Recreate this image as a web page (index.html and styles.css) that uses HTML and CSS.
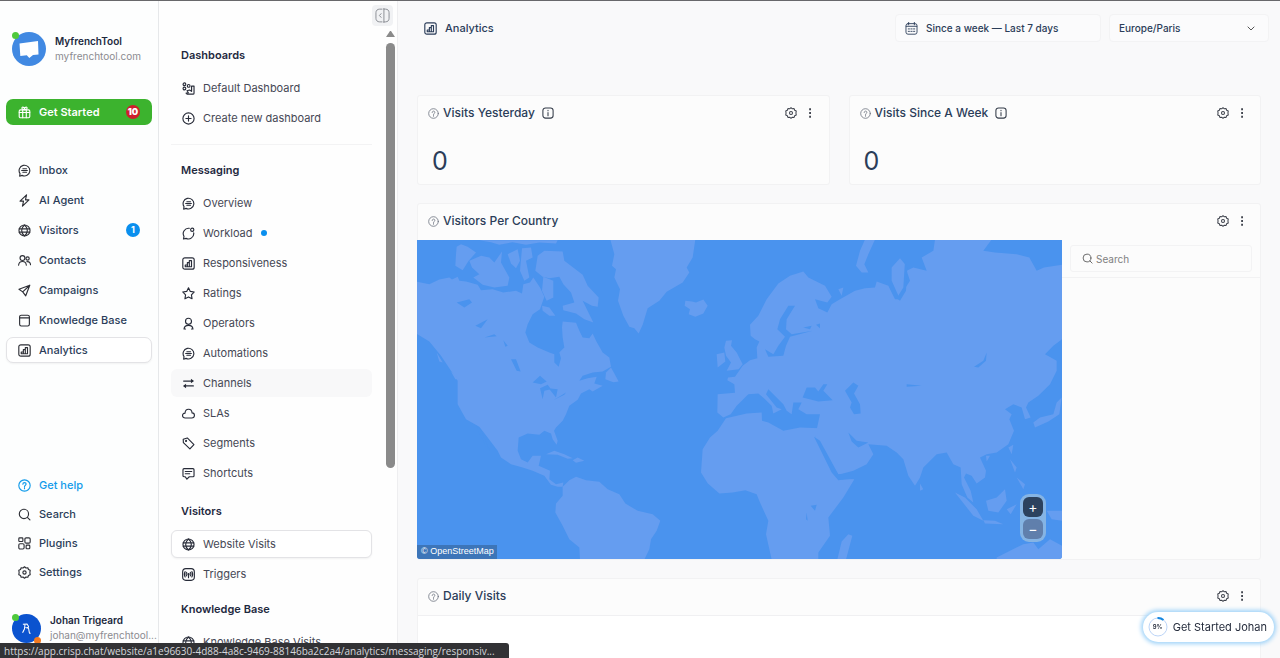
FILE: index.html
```
<!DOCTYPE html>
<html lang="en">
<head>
<meta charset="utf-8">
<title>Analytics</title>
<link rel="stylesheet" href="styles.css">
</head>
<body>
<svg class="sprite" aria-hidden="true">
  <symbol id="i-gift" viewBox="0 0 16 16"><rect x="1.5" y="4.8" width="13" height="9.7" rx="1.5"/><path d="M1.5 8h13M5.8 4.8v9.7M10.2 4.8v9.7M8 4.6C4 4.6 4.2 1.2 6 1.4c1.300.1 2 1.600 2 3.200 0-1.600.7-3.100 2-3.200 1.800-.2 2 3.200-2 3.200"/></symbol>
  <symbol id="i-chat" viewBox="0 0 16 16"><path d="M2 15l.5-3.200A6.600 6.600 0 1 1 5 14z"/><path d="M6 5.800h4.500M4.500 8h7M6 10.200h4.500"/></symbol>
  <symbol id="i-bolt" viewBox="0 0 16 16"><path d="M10.500 1L2.500 8.800h4.300L5.500 15l8-7.800H9.200z"/></symbol>
  <symbol id="i-globe" viewBox="0 0 16 16"><circle cx="8" cy="8" r="6.800"/><path d="M1.500 6h13M1.500 10h13M8 1.200c-4.600 3.600-4.600 10 0 13.600 4.600-3.600 4.600-10 0-13.600z"/></symbol>
  <symbol id="i-users" viewBox="0 0 16 16"><circle cx="5.500" cy="5" r="3"/><circle cx="11.800" cy="5.600" r="2"/><path d="M.7 13.800c.3-3 2-4.600 4.800-4.600s4.500 1.600 4.800 4.600M10.800 9.500c2.800-.6 4.300 1 4.600 3.600"/></symbol>
  <symbol id="i-send" viewBox="0 0 16 16"><path d="M14.500 1.500L1.200 6.500l4.600 3.200 3.700 4.800zM5.800 9.700L14.500 1.500"/></symbol>
  <symbol id="i-book" viewBox="0 0 16 16"><rect x="2" y="1.500" width="12" height="13.200" rx="2"/><path d="M2 4.800h12"/></symbol>
  <symbol id="i-chart" viewBox="0 0 16 16"><rect x="1" y="1" width="14" height="14" rx="2.500"/><path d="M4 12V9.800h2.600V12zM6.600 12V7h2.400v5zM9 12V4.500h2.700V12z"/></symbol>
  <symbol id="i-help" viewBox="0 0 16 16"><circle cx="8" cy="8" r="7"/><path d="M6 6.500C6 3.700 10 3.900 10 6.300 10 7.800 8 7.700 8 9.500M8 11v1"/></symbol>
  <symbol id="i-search" viewBox="0 0 16 16"><circle cx="7.300" cy="7.300" r="5.700"/><path d="M11.500 11.500l3.200 3.200"/></symbol>
  <symbol id="i-plugins" viewBox="0 0 16 16"><rect x="1" y="1" width="5" height="4.500" rx="1"/><rect x="8.500" y="1" width="6.500" height="6.500" rx="1.500"/><rect x="1" y="8.300" width="6.500" height="6.500" rx="1.500"/><rect x="10" y="10" width="4.500" height="4.500" rx="1"/></symbol>
  <symbol id="i-gear" viewBox="0 0 16 16"><circle cx="8" cy="8" r="2"/><path d="M8 .9l1.800 1.500 2.300-.3.800 2.200 2.100 1L14.600 8l.4 2.700-2.100 1-.8 2.200-2.300-.3L8 15.100l-1.800-1.500-2.300.3-.8-2.200-2.100-1L1.400 8 1 5.300l2.100-1 .8-2.200 2.300.3z"/></symbol>
  <symbol id="i-dash" viewBox="0 0 16 16"><circle cx="3" cy="2.800" r="1.700"/><circle cx="3" cy="8" r="1.700"/><circle cx="8.200" cy="4.800" r="1.700"/><path d="M11.800 5h3v8.700c0 .8-.5 1.300-1.300 1.300H6.300L5 13.600l2.800-.4-1.600-2.500 3.200-.9 2.400 1.700z"/></symbol>
  <symbol id="i-plus" viewBox="0 0 16 16"><circle cx="8" cy="8" r="6.900"/><path d="M8 4.800v6.400M4.800 8h6.400"/></symbol>
  <symbol id="i-load" viewBox="0 0 16 16"><circle cx="12.600" cy="3.400" r="2"/><path d="M14.400 7.200A6.600 6.600 0 0 1 5 14L1.800 14.800 2.500 11.600A6.600 6.600 0 0 1 9 1.600"/></symbol>
  <symbol id="i-star" viewBox="0 0 16 16"><path d="M8 1l2.200 4.400 4.900.7-3.500 3.500.8 4.900L8 12.200l-4.400 2.300.8-4.900L.9 6.100l4.900-.7z"/></symbol>
  <symbol id="i-user" viewBox="0 0 16 16"><circle cx="8" cy="5.300" r="3.700"/><path d="M4.300 14.800H2.500c.3-2.700 2.200-4.500 5.500-4.500s5.200 1.800 5.500 4.500h-1.800"/></symbol>
  <symbol id="i-swap" viewBox="0 0 16 16"><path d="M2 5h11M14 11H3"/><path class="solid" d="M11 2.200L14.800 5 11 7.800zM5 8.200L1.200 11 5 13.800z"/></symbol>
  <symbol id="i-cloud" viewBox="0 0 16 16"><path d="M4 13.500C-.5 13.500-.3 7.500 3.700 7.500 4.300 1 12 1.500 12.400 7.300c3.900.2 3.900 6.200-.4 6.200z"/></symbol>
  <symbol id="i-tag" viewBox="0 0 16 16"><path d="M1.500 2.800L6.500 1.200l8.200 8.300-5 5.200L1.700 7z"/><circle cx="5" cy="4.800" r=".6"/></symbol>
  <symbol id="i-note" viewBox="0 0 16 16"><path d="M2.500 2h11c.8 0 1.300.5 1.300 1.300v7.400c0 .8-.5 1.300-1.300 1.300H9l-3 3-2-3H2.500c-.8 0-1.300-.5-1.300-1.300V3.300C1.200 2.500 1.700 2 2.500 2zM4 5.500h8M4 8.300h5.500"/></symbol>
  <symbol id="i-signal" viewBox="0 0 16 16"><rect x=".8" y=".8" width="14.400" height="14.400" rx="4"/><circle cx="8" cy="7.500" r=".8"/><path d="M8 8v4M5.800 5.500c-1 1.200-1 3 0 4.200M10.200 5.500c1 1.200 1 3 0 4.200M3.900 4.500c-1.300 2-1.300 4.500 0 6.500M12.100 4.500c1.300 2 1.300 4.500 0 6.500"/></symbol>
  <symbol id="i-info" viewBox="0 0 16 16"><rect x="1.200" y="1.200" width="13.600" height="13.600" rx="3.500"/><path d="M8 4.300v.6M8 7.500v4"/></symbol>
  <symbol id="i-cal" viewBox="0 0 16 16"><rect x="1.200" y="2" width="13.600" height="13" rx="2.500"/><path d="M4.500.5v3M11.500.5v3M1.500 5.300h13M4 8.500h1.500M7.200 8.500h1.600M10.500 8.500H12M4 11.500h1.500M7.200 11.500h1.600M10.500 11.500H12"/></symbol>
  <symbol id="i-dots" viewBox="0 0 16 16"><path class="solid" d="M6.900 1.800h2.400v2.600H6.900zM6.900 6.700h2.400v2.600H6.900zM6.900 11.600h2.400v2.600H6.900z"/></symbol>
  <symbol id="i-collapse" viewBox="0 0 16 16"><path d="M7.500 1.200H5C2.500 1.200 1 2.700 1 5v6c0 2.300 1.500 3.800 4 3.800h2.500M9.500.5v15M9.500 1.200h1.700C13.600 1.200 15 2.700 15 5v6c0 2.300-1.400 3.800-3.800 3.800H9.500M6.500 6L4.700 8l1.800 2"/></symbol>
</svg>

<div class="app">
  <aside class="sidebar">
    <div class="account">
      <span class="logo"><svg viewBox="0 0 34 34"><circle cx="17" cy="17" r="17"/><path d="M7.500 11.500L26 9l.5 13.500-5.500.4-3.700 3.100-2.500-2.700-6.500.6z"/></svg><i class="presence"></i></span>
      <div><strong>MyfrenchTool</strong><span>myfrenchtool.com</span></div>
    </div>
    <a class="nav started" href="#"><svg class="icon"><use href="#i-gift"/></svg>Get Started<b class="count red">10</b></a>
    <nav class="menu">
      <a class="nav" href="#"><svg class="icon"><use href="#i-chat"/></svg>Inbox</a>
      <a class="nav" href="#"><svg class="icon"><use href="#i-bolt"/></svg>AI Agent</a>
      <a class="nav" href="#"><svg class="icon"><use href="#i-globe"/></svg>Visitors<b class="count">1</b></a>
      <a class="nav" href="#"><svg class="icon"><use href="#i-users"/></svg>Contacts</a>
      <a class="nav" href="#"><svg class="icon"><use href="#i-send"/></svg>Campaigns</a>
      <a class="nav" href="#"><svg class="icon"><use href="#i-book"/></svg>Knowledge Base</a>
      <a class="nav selected" href="#"><svg class="icon"><use href="#i-chart"/></svg>Analytics</a>
    </nav>
    <nav class="menu lower">
      <a class="nav help" href="#"><svg class="icon"><use href="#i-help"/></svg>Get help</a>
      <a class="nav" href="#"><svg class="icon"><use href="#i-search"/></svg>Search</a>
      <a class="nav" href="#"><svg class="icon"><use href="#i-plugins"/></svg>Plugins</a>
      <a class="nav" href="#"><svg class="icon"><use href="#i-gear"/></svg>Settings</a>
    </nav>
    <div class="account operator">
      <span class="logo avatar"><svg viewBox="0 0 28 28"><circle cx="14" cy="14" r="14"/><path class="sketch" d="M10.500 10l4-.3 1.500 2.300-1 2M12.500 10.500l-.5 4-1.800 3.500M13 13l3 .8.800 4.500M16.500 18.500h1.500"/></svg><i class="presence"></i><i class="device"></i></span>
      <div><strong>Johan Trigeard</strong><span>johan@myfrenchtool...</span></div>
    </div>
  </aside>

  <section class="panel">
    <button class="collapse" type="button" aria-label="Collapse menu"><svg class="icon"><use href="#i-collapse"/></svg></button>
    <div class="scrollbar"><i></i><b></b></div>
    <div class="group ruled">
      <h2>Dashboards</h2>
      <a class="item" href="#"><svg class="icon"><use href="#i-dash"/></svg>Default Dashboard</a>
      <a class="item" href="#"><svg class="icon"><use href="#i-plus"/></svg>Create new dashboard</a>
    </div>
    <div class="group roomy">
      <h2>Messaging</h2>
      <a class="item" href="#"><svg class="icon"><use href="#i-chat"/></svg>Overview</a>
      <a class="item" href="#"><svg class="icon"><use href="#i-load"/></svg>Workload<i class="dot"></i></a>
      <a class="item" href="#"><svg class="icon"><use href="#i-chart"/></svg>Responsiveness</a>
      <a class="item" href="#"><svg class="icon"><use href="#i-star"/></svg>Ratings</a>
      <a class="item" href="#"><svg class="icon"><use href="#i-user"/></svg>Operators</a>
      <a class="item" href="#"><svg class="icon"><use href="#i-chat"/></svg>Automations</a>
      <a class="item hovered" href="#"><svg class="icon"><use href="#i-swap"/></svg>Channels</a>
      <a class="item" href="#"><svg class="icon"><use href="#i-cloud"/></svg>SLAs</a>
      <a class="item" href="#"><svg class="icon"><use href="#i-tag"/></svg>Segments</a>
      <a class="item" href="#"><svg class="icon"><use href="#i-note"/></svg>Shortcuts</a>
    </div>
    <div class="group">
      <h2>Visitors</h2>
      <a class="item selected" href="#"><svg class="icon"><use href="#i-globe"/></svg>Website Visits</a>
      <a class="item" href="#"><svg class="icon"><use href="#i-signal"/></svg>Triggers</a>
    </div>
    <div class="group">
      <h2>Knowledge Base</h2>
      <a class="item" href="#"><svg class="icon"><use href="#i-globe"/></svg>Knowledge Base Visits</a>
    </div>
  </section>

  <main class="main">
    <header class="topbar">
      <h1><svg class="icon"><use href="#i-chart"/></svg>Analytics</h1>
      <button class="field date" type="button"><svg class="icon"><use href="#i-cal"/></svg>Since a week — Last 7 days</button>
      <span class="field zone"><select aria-label="Time zone"><option>Europe/Paris</option></select><svg viewBox="0 0 8 5"><path d="M.7.7L4 4 7.300.7"/></svg></span>
    </header>
    <div class="cards">
      <article class="card stat">
        <div class="head"><svg class="icon hint"><use href="#i-help"/></svg><h3>Visits Yesterday</h3><svg class="icon info"><use href="#i-info"/></svg>
          <button type="button" aria-label="Settings"><svg class="icon"><use href="#i-gear"/></svg></button><button type="button" aria-label="More"><svg class="icon"><use href="#i-dots"/></svg></button></div>
        <p class="value">0</p>
      </article>
      <article class="card stat">
        <div class="head"><svg class="icon hint"><use href="#i-help"/></svg><h3>Visits Since A Week</h3><svg class="icon info"><use href="#i-info"/></svg>
          <button type="button" aria-label="Settings"><svg class="icon"><use href="#i-gear"/></svg></button><button type="button" aria-label="More"><svg class="icon"><use href="#i-dots"/></svg></button></div>
        <p class="value">0</p>
      </article>
      <article class="card wide">
        <div class="head"><svg class="icon hint"><use href="#i-help"/></svg><h3>Visitors Per Country</h3>
          <button type="button" aria-label="Settings"><svg class="icon"><use href="#i-gear"/></svg></button><button type="button" aria-label="More"><svg class="icon"><use href="#i-dots"/></svg></button></div>
        <div class="geo">
          <div class="map">
            <svg viewBox="3 6 1935 960" preserveAspectRatio="xMidYMid slice" role="img" aria-label="World map">
              <g class="land">
                <path d="M0 132L40 140 70 126 100 120 108 126 125 118 130 130 150 132 185 142 195 158 230 155 262 165 300 160 318 168 322 140 342 135 352 120 372 150 385 178 372 215 350 230 335 260 328 285 340 315 365 330 400 345 415 350 415 375 428 388 435 362 430 345 445 330 440 300 438 270 440 252 480 256 490 280 500 300 520 302 530 288 540 310 560 345 580 360 585 388 560 402 530 405 500 415 490 430 515 422 542 418 535 438 560 445 530 462 520 455 495 468 485 487 460 505 450 530 440 550 420 570 414 580 425 610 422 622 410 605 405 588 385 580 370 592 335 588 308 600 305 640 315 665 335 675 350 655 375 655 368 685 402 700 400 725 420 740 442 735 440 748 425 748 405 742 385 715 350 700 320 690 285 680 255 660 245 640 215 600 190 568 150 545 125 500 125 430 105 400 75 355 40 312 0 288Z"/>
                <path d="M122 28L135 20 155 28 180 45 158 70 140 98 118 85 120 50Z"/>
                <path d="M160 70L195 55 220 60 235 75 258 42 255 75 280 120 275 145 235 150 200 142 172 120 190 110 168 90Z"/>
                <path d="M190 8H425L420 18 370 15 330 22 290 14 250 22 225 14Z"/>
                <path d="M275 50L305 35 312 70 300 92 285 78Z"/><path d="M318 32L345 30 350 60 330 70 340 120 325 130 312 100Z"/>
                <path d="M365 55L385 40 440 42 445 70 500 112 515 145 548 180 545 208 528 205 500 190 532 255 505 245 480 228 442 218 440 205 475 195 465 165 442 140 430 118 400 122 380 118 358 100Z"/>
                <path d="M382 118L412 130 412 180 392 190 378 160Z"/><path d="M378 205L400 210 418 235 400 235 380 220Z"/>
                <path d="M583 6H838L830 60 812 90 820 105 800 135 752 163 730 190 695 212 680 262 668 288 655 272 640 268 622 235 606 190 612 155 595 120 600 95 588 85 595 50Z"/>
                <path d="M808 190L828 192 840 195 862 186 875 205 862 228 838 238 818 230 822 215 806 205Z"/>
                <path d="M568 425L570 405 585 390 595 408 608 432 592 434Z"/><path d="M390 650L415 640 445 650 470 662 455 664 425 652ZM470 668L485 660 505 670 480 676Z"/>
                <path d="M440 748L460 728 480 718 510 728 550 733 575 755 610 770 628 798 665 820 710 830 733 850 722 880 705 905 700 935 685 966H492L490 930 460 905 440 865 418 825 420 798 440 775Z"/>
                <path d="M902 350L925 345 928 372 905 390ZM930 310L948 308 945 325 962 345 980 380 968 395 932 400 945 375 930 355 925 330Z"/>
                <path d="M62 345L80 375 70 372ZM105 402L130 425 118 425Z"/>
              </g>
              <g class="water">
                <path d="M122 195L160 185 168 195 145 210ZM178 265L215 245 195 272ZM205 300L235 290 242 296ZM262 308L275 325 268 328ZM285 365L300 365 314 402 302 400ZM350 435L372 415 392 432 375 440ZM372 452L395 442 405 455 385 460 380 485ZM398 452L425 455 420 480ZM412 488L450 465 445 472Z"/>
                <path d="M180 565L195 580 222 640 208 625Z"/>
              </g>
              <g transform="translate(972 0)">
                <g class="land">
                  <path d="M-67 470L-15 466 -17 440 -38 428 -36 420 -15 418 8 385 30 368 52 362 50 330 58 312 45 305 32 295 30 262 55 235 80 185 115 138 150 115 190 102 205 120 255 145 275 178 262 195 225 185 235 212 262 225 275 200 300 185 345 160 375 152 405 150 410 132 445 145 465 185 480 185 455 130 455 90 480 62 495 80 497 150 510 130 500 100 520 90 560 100 545 60 580 40 585 6H755L730 40 765 45 830 50 868 60 890 100 912 90 966 82V305L940 325 915 350 950 370 950 400 930 440 895 475 865 495 858 510 872 540 855 545 845 510 820 500 795 515 815 530 808 545 822 580 805 620 770 645 740 650 720 660 738 700 735 720 710 738 695 715 678 708 672 720 692 760 700 795 682 780 665 740 662 690 640 680 620 645 590 650 550 690 540 720 525 745 505 715 490 665 470 645 440 625 385 620 400 650 380 680 340 700 295 712 225 600 240 530 200 530 175 515 185 495 160 495 155 530 140 520 130 500 85 455 78 470 110 510 125 515 100 528 95 505 75 485 55 468 25 470 0 495 -10 505 -28 530 -50 540 -68 525Z"/>
                  <path d="M-42 542L-67 580 -90 600 -112 635 -117 705 -97 737 -62 768 -22 765 16 758 50 770 60 795 85 850 78 890 95 966H235V945L270 895 265 840 310 780 343 725 295 724 275 700 225 600 238 572 180 570 130 580 85 555 66 550 65 525 20 528Z"/>
                  <path d="M305 912L325 890 337 895 318 966H292ZM375 6H405L385 50 373 80 385 105 365 105 348 85 360 40ZM540 738L550 755 540 760ZM645 765L675 780 710 815 730 850 700 835ZM738 790L770 780 795 755 800 790 775 825 745 820ZM805 630L820 622 815 650ZM810 665L830 690 825 705ZM830 720L855 740 850 755ZM730 848L765 850 790 860 735 858ZM880 555L900 540 940 530 950 495 965 480 958 530 925 552 885 570ZM800 815L830 800 812 830ZM920 820L966 820V850L935 845ZM770 960L810 940 850 920 880 915 895 935 930 905 966 925V966H770ZM738 655L750 655 740 672ZM295 155L310 150 305 175Z"/>
                </g>
                <g class="water">
                  <path d="M75 335L100 350 115 325 135 298 112 275 120 245 145 205 165 205 140 245 138 275 155 290 218 280 150 298 138 325 130 355 85 358Z"/>
                  <path d="M188 480L200 450 225 450 235 462 250 440 262 440 250 460 278 488 235 492ZM315 460L340 435 355 445 342 468 360 500 362 528 342 530 330 510 335 495ZM222 598L240 610 295 710 330 708 340 724 295 728 275 705ZM325 585L350 610 385 615 355 630 335 612ZM702 388L730 370 740 345 738 370 715 390ZM212 805L230 802 225 820ZM200 825L203 850 198 845ZM500 440L545 445 500 448ZM228 262L240 258 240 272ZM190 270L215 265 210 275ZM495 70L502 90 498 160 480 190 470 182 490 150Z"/>
                </g>
              </g>
            </svg>
            <a class="credit" href="#">© OpenStreetMap</a>
            <div class="zoom"><button type="button" aria-label="Zoom in">+</button><button class="off" type="button" aria-label="Zoom out">−</button></div>
          </div>
          <div class="countries"><label class="find"><svg class="icon"><use href="#i-search"/></svg><input type="text" placeholder="Search" aria-label="Search countries"></label></div>
        </div>
      </article>
      <article class="card wide daily">
        <div class="head"><svg class="icon hint"><use href="#i-help"/></svg><h3>Daily Visits</h3>
          <button type="button" aria-label="Settings"><svg class="icon"><use href="#i-gear"/></svg></button><button type="button" aria-label="More"><svg class="icon"><use href="#i-dots"/></svg></button></div>
        <div class="plot"></div>
      </article>
    </div>
  </main>
</div>
<button class="guide" type="button"><span class="ring"><svg viewBox="0 0 20 20"><circle cx="10" cy="10" r="9"/><path d="M9.500 1a9 9 0 0 1 6 2"/></svg>9%</span>Get Started Johan</button>
<div class="status">https://app.crisp.chat/website/a1e96630-4d88-4a8c-9469-88146ba2c2a4/analytics/messaging/responsiv...</div>
</body>
</html>
```
FILE: styles.css
```
* { box-sizing: border-box; }
body { margin: 0; font-family: Inter, "Open Sans", sans-serif; font-size: 11px; line-height: 16px; color: #2b3d59; background: #fafafa; }
h1, h2, h3, p { margin: 0; }
a { color: inherit; text-decoration: none; }
button, input, select { font: inherit; color: inherit; }
button { cursor: pointer; }
.sprite { position: absolute; width: 0; height: 0; }
.icon { flex: none; width: 13px; height: 13px; fill: none; stroke: currentColor; stroke-width: 1.4; stroke-linecap: round; stroke-linejoin: round; }
.solid { fill: currentColor; stroke: none; }

.app { display: flex; height: 100vh; overflow: hidden; border-top: 1px solid #68686b; }

.sidebar { flex: none; display: flex; flex-direction: column; width: 159px; padding: 31px 6px 15px; background: #fdfefe; border-right: 1px solid #e6e8ea; }
.account { display: flex; align-items: center; gap: 9px; padding-left: 6px; line-height: 15px; font-size: 10px; color: #8b8b90; }
.account strong, .account div span { display: block; white-space: nowrap; }
.account strong { font-weight: 600; color: #20283d; }
.logo { position: relative; flex: none; width: 34px; height: 34px; }
.logo svg { display: block; fill: #fff; }
.logo circle { fill: #4189e2; }
.avatar { width: 29px; height: 29px; }
.avatar circle { fill: #0b53cf; }
.logo .sketch { fill: none; stroke: #fff; stroke-width: 1; }
.presence, .device { position: absolute; width: 7px; height: 7px; border-radius: 50%; background: #4fc93c; }
.presence { top: 0; left: 0; }
.device { right: 0; bottom: -1px; background: #f37a21; }
.nav { display: flex; align-items: center; gap: 8px; height: 26px; padding: 0 11px; border: 1px solid transparent; border-radius: 7px; font-weight: 500; white-space: nowrap; }
.nav .icon { color: #2d2f36; }
.count { min-width: 14px; height: 14px; margin-left: auto; border-radius: 7px; background: #0a8fee; color: #fff; font-size: 9px; line-height: 14px; text-align: center; }
.red { background: #cf1e2c; }
.started { margin-top: 33px; background: #3cb32e; color: #fff; font-weight: 600; }
.started .icon { color: #fff; }
.menu { display: flex; flex-direction: column; gap: 4px; margin-top: 32px; }
.selected { background: #fff; border: 1px solid #e3e3e6; box-shadow: 0 1px 2px #0000000d; }
.menu.lower { gap: 3px; margin-top: auto; }
.help, .help .icon { color: #129bea; }
.operator { margin-top: 28px; gap: 9px; }

.panel { position: relative; flex: none; width: 239px; padding: 44px 25px 0 12px; overflow: hidden; background: #fefefe; border-right: 1px solid #eeeef0; color: #454754; }
.collapse { position: absolute; top: 4px; right: 4px; display: grid; place-items: center; width: 21px; height: 21px; padding: 0; border: 0; border-radius: 4px; background: #f1f2f4; color: #888b91; }
.collapse .icon { width: 15px; height: 15px; stroke-width: 1; }
.scrollbar { position: absolute; top: 30px; right: 2px; bottom: 190px; display: flex; flex-direction: column; gap: 6px; width: 9px; }
.scrollbar i { border: 4px solid transparent; border-top: 0; border-bottom: 6px solid #8a8a8a; }
.scrollbar b { flex: 1; border-radius: 5px; background: #8a8a8a; }
.group { display: flex; flex-direction: column; gap: 2px; padding-bottom: 11px; }
.ruled { margin-bottom: 15px; padding-bottom: 12px; border-bottom: 1px solid #f3f3f4; }
.roomy { padding-bottom: 14px; }
.group h2 { margin-bottom: 7px; padding-left: 10px; font-size: 11px; font-weight: 600; line-height: 20px; color: #1f2940; }
.item { display: flex; align-items: center; gap: 8px; height: 28px; padding: 0 10px; border: 1px solid transparent; border-radius: 6px; white-space: nowrap; }
.item .icon { color: #272b38; }
.item.selected { border-color: #e3e3e6; }
.hovered { background: #f8f8f9; }
.dot { width: 6px; height: 6px; border-radius: 50%; background: #0a8fee; }

.main { flex: 1; min-width: 0; overflow: hidden; background: #f9f9fa; }
.topbar { display: flex; gap: 8px; padding: 13px 11px 53px 26px; }
.topbar h1 { display: flex; align-items: center; gap: 8px; height: 28px; margin-right: auto; font-size: 11px; font-weight: 500; }
.field { display: flex; align-items: center; height: 28px; padding: 0 9px; border: 1px solid #f3f3f4; border-radius: 4px; background: #fbfbfc; font-size: 10px; font-weight: 500; }
.field .icon { stroke-width: 1.1; }
.date { gap: 8px; width: 206px; }
.zone { position: relative; width: 160px; padding: 0; }
.zone select { flex: 1; height: 26px; padding: 0 9px; appearance: none; border: 0; background: none; }
.zone svg { position: absolute; right: 13px; width: 8px; fill: none; stroke: #555; pointer-events: none; }
.cards { display: grid; grid-template-columns: 1fr 1fr; gap: 18px 19px; padding: 0 19px; }
.card { border: 1px solid #f2f2f3; border-radius: 3px; background: #fcfcfc; }
.stat { height: 90px; }
.wide { grid-column: 1 / -1; }
.head { display: flex; align-items: center; gap: 4px; height: 36px; padding: 0 12px 2px 10px; }
.head h3 { margin-right: auto; font-size: 12px; font-weight: 500; line-height: 18px; }
.head h3:has(+ .info) { margin-right: 3px; }
.head .info { width: 12px; height: 12px; margin-right: auto; color: #333b48; }
.head .hint { width: 11px; height: 11px; color: #707682; stroke-width: 1.2; }
.head button { display: grid; place-items: center; width: 13px; height: 18px; padding: 0; border: 0; background: none; color: #3d414b; }
.head button + button { margin-left: 2px; }
.head button .icon { width: 12px; height: 12px; }
.value { padding: 13px 14px; font-size: 25px; line-height: 32px; }
.geo { display: flex; }
.map { position: relative; flex: 1; height: 319px; margin-left: -1px; overflow: hidden; border-radius: 0 0 3px 3px; background: #4a93ee; }
.map > svg { display: block; width: 100%; height: 100%; }
.land { fill: #659df0; }
.water { fill: #4a93ee; }
.credit { position: absolute; left: 0; bottom: 0; height: 14px; padding: 0 3px 0 4px; background: #3d75b8; color: #fff; font: 9px/13px "Liberation Sans", sans-serif; }
.zoom { position: absolute; right: 16px; bottom: 17px; display: grid; gap: 2px; padding: 3px; border-radius: 9px; background: #85b4e4; }
.zoom button { width: 20px; height: 20px; padding: 0; border: 0; border-radius: 6px; background: #2c425e; color: #fff; font-size: 14px; line-height: 18px; }
.zoom .off { background: #607fac; }
.countries { flex: 0 0 198px; }
.find { position: relative; display: flex; align-items: center; height: 38px; padding: 0 8px; border-bottom: 1px solid #f2f2f3; }
.find .icon { position: absolute; left: 20px; width: 11px; height: 11px; color: #666; }
.find input { flex: 1; min-width: 0; height: 27px; padding: 0 0 0 25px; border: 1px solid #f3f3f4; border-radius: 3px; background: none; font-size: 10px; }
.find input::placeholder { color: #808080; opacity: 1; }
.plot { height: 300px; border-top: 1px solid #f0f0f2; background: #fff; }

.guide { position: fixed; right: 6px; bottom: 16px; display: flex; align-items: center; gap: 5px; height: 30px; padding: 0 7px 0 5px; border: 0; border-radius: 15px; background: #fff; box-shadow: 0 0 4px 2px #a0d3f8; color: #252c3c; }
.ring { display: grid; place-items: center; width: 20px; height: 20px; font-size: 6px; font-weight: 600; line-height: 8px; }
.ring > svg { position: absolute; width: 20px; height: 20px; fill: none; stroke: #bcd5f8; stroke-width: 1; }
.ring path { stroke: #1787df; stroke-width: 2; }
.status { position: fixed; left: 0; bottom: 0; height: 15px; padding: 0 14px 0 4px; border-top-right-radius: 3px; background: #323235; color: #d5d7dc; font: 10px/17px "Open Sans", sans-serif; white-space: nowrap; }
```
